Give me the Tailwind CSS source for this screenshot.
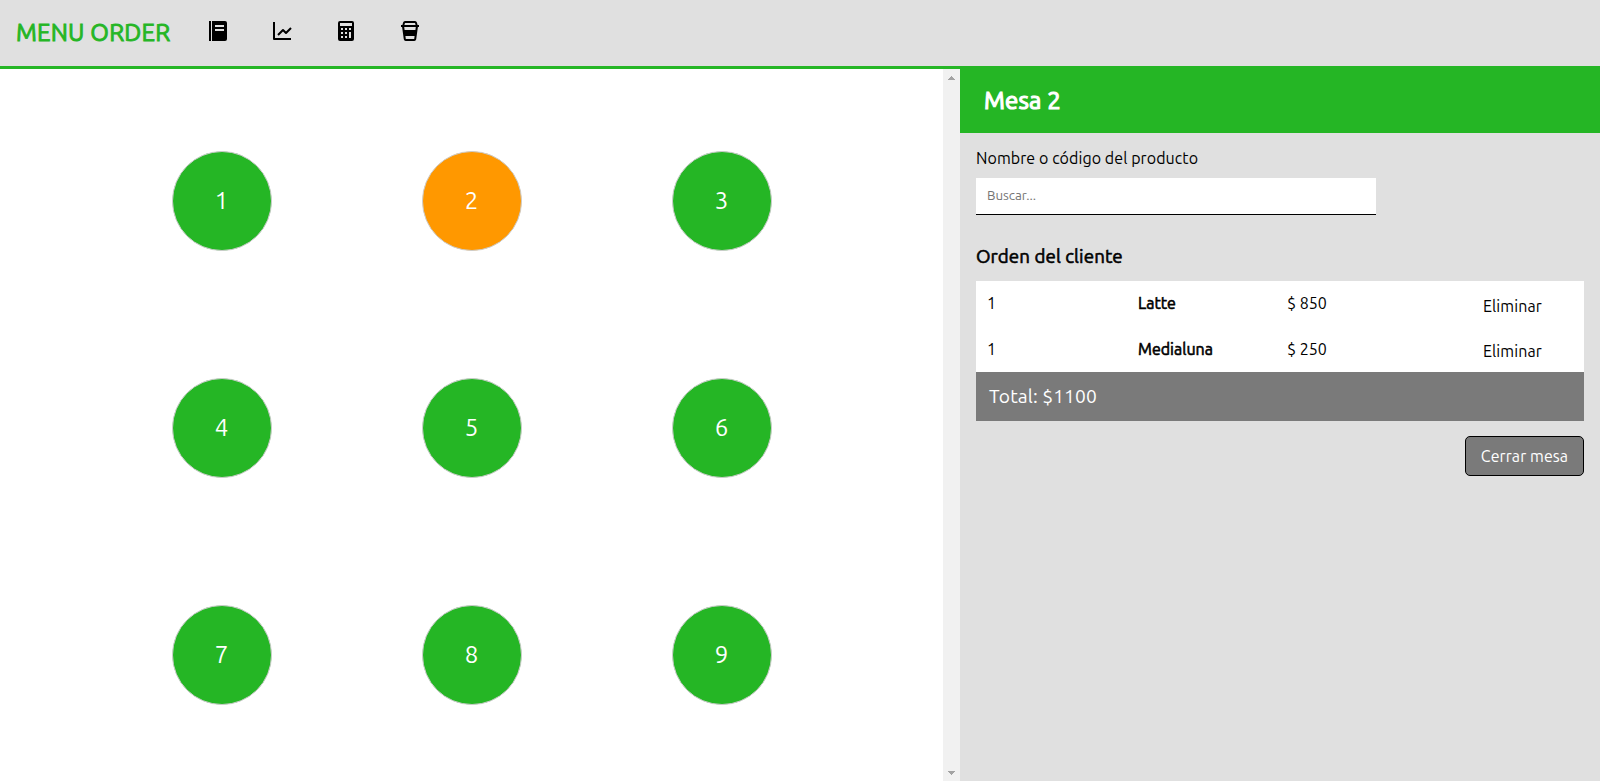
<!DOCTYPE html>
<html lang="es">
<head>
<meta charset="utf-8">
<title>Menu Order</title>
<script src="https://cdn.jsdelivr.net/npm/@tailwindcss/browser@4"></script>
</head>
<body class="flex h-[781px] flex-col overflow-hidden bg-white font-['Ubuntu','Noto_Sans',sans-serif] text-base text-black">
<header class="flex h-[66px] shrink-0 items-center bg-[#e0e0e0] pl-4">
  <h1 class="w-[190px] whitespace-nowrap text-2xl font-normal tracking-[0.2px] text-[#25b625] [-webkit-text-stroke:0.9px_#25b625]">MENU ORDER</h1>
  <nav class="mb-1 flex gap-10">
    <svg class="size-6" viewBox="0 0 24 24"><path d="M3 2h2v20H3zM19 2H6v20h13a2 2 0 0 0 2-2V4a2 2 0 0 0-2-2zm-1 10H9v-2h9zm0-4H9V6h9z"/></svg>
    <svg class="size-6" viewBox="0 0 24 24"><path d="M3 3v17a1 1 0 0 0 1 1h17v-2H5V3H3z"/><path d="M15.293 14.707a.999.999 0 0 0 1.414 0l5-5-1.414-1.414L16 12.586l-2.293-2.293a.999.999 0 0 0-1.414 0l-5 5 1.414 1.414L13 12.414l2.293 2.293z"/></svg>
    <svg class="size-6" viewBox="0 0 24 24"><path d="M18 2H6a2 2 0 0 0-2 2v16a2 2 0 0 0 2 2h12a2 2 0 0 0 2-2V4a2 2 0 0 0-2-2zM9 19H7v-2h2zm0-4H7v-2h2zm0-4H7V9h2zm4 8h-2v-2h2zm0-4h-2v-2h2zm0-4h-2V9h2zm4 8h-2v-6h2zm0-8h-2V9h2zm1-4H6V4h12z"/></svg>
    <svg class="size-6" viewBox="0 0 24 24"><path d="M21 6h-1.400L18.900 3.500A2 2 0 0 0 17 2H7a2 2 0 0 0-1.900 1.500L4.400 6H3v2h1.100l1.700 12.300A2 2 0 0 0 7.800 22h8.400a2 2 0 0 0 2-1.700L19.900 8H21zM7 4h10l.6 2H6.400zm9.200 16H7.800l-.4-3h9.200zM17.400 11H6.600l-.4-3h11.600z"/></svg>
  </nav>
</header>
<main class="flex min-h-0 flex-1">
  <section class="flex w-[960px] border-t-3 border-[#25b625]">
    <div class="flex w-[943px] justify-center pt-[18px] pl-px">
      <div class="grid h-[681px] w-[750px] grid-cols-3 grid-rows-3 place-items-center text-2xl text-white">
        <div class="flex size-[100px] items-center justify-center rounded-full border border-[#ccc] bg-[#25b625] pr-px">1</div>
        <div class="flex size-[100px] items-center justify-center rounded-full border border-[#ccc] bg-[#ff9800] pr-px">2</div>
        <div class="flex size-[100px] items-center justify-center rounded-full border border-[#ccc] bg-[#25b625] pr-px">3</div>
        <div class="flex size-[100px] items-center justify-center rounded-full border border-[#ccc] bg-[#25b625] pr-px">4</div>
        <div class="flex size-[100px] items-center justify-center rounded-full border border-[#ccc] bg-[#25b625] pr-px">5</div>
        <div class="flex size-[100px] items-center justify-center rounded-full border border-[#ccc] bg-[#25b625] pr-px">6</div>
        <div class="flex size-[100px] items-center justify-center rounded-full border border-[#ccc] bg-[#25b625] pr-px">7</div>
        <div class="flex size-[100px] items-center justify-center rounded-full border border-[#ccc] bg-[#25b625] pr-px">8</div>
        <div class="flex size-[100px] items-center justify-center rounded-full border border-[#ccc] bg-[#25b625] pr-px">9</div>
      </div>
    </div>
    <div class="flex w-[17px] flex-col items-center justify-between bg-[#f1f1f1] pt-[7px] pb-[6px]">
      <svg class="h-1 w-[7px]" viewBox="0 0 7 4" fill="#a3a3a3" shape-rendering="crispEdges"><path d="M3 0h1v1h1v1h1v1h1v1H0V3h1V2h1V1h1z"/></svg>
      <svg class="h-1 w-[7px]" viewBox="0 0 7 4" fill="#a3a3a3" shape-rendering="crispEdges"><path d="M0 0h7v1H6v1H5v1H4v1H3V3H2V2H1V1H0z"/></svg>
    </div>
  </section>
  <aside class="flex w-[640px] flex-col bg-[#e0e0e0]">
    <h2 class="flex h-[67px] items-center bg-[#25b625] pt-0.5 pl-6 text-2xl font-normal tracking-[0.2px] text-white [-webkit-text-stroke:1.2px_white]">Mesa 2</h2>
    <div class="flex flex-col px-4 pt-[13px]">
      <label for="q" class="h-8 whitespace-nowrap tracking-[0.07px]">Nombre o código del producto</label>
      <input id="q" class="h-[37px] w-[400px] border-b border-black bg-white px-[11px] pb-0.5 text-[13.333px] placeholder:text-[#757575]" placeholder="Buscar...">
      <h3 class="mt-[30px] h-9 text-[18.720px] leading-6 font-normal tracking-[0.1px] [-webkit-text-stroke:0.6px_black]">Orden del cliente</h3>
      <div class="grid h-[91px] grid-cols-[150px_150px_150px_1fr] grid-rows-[46px_45px] bg-white pl-[11px]">
        <span class="pt-[10px]">1</span><span class="pt-[10px] pl-px [-webkit-text-stroke:0.6px_black]">Latte</span><span class="pt-[10px]">$ 850</span><span class="pt-[13px] pl-1 text-center tracking-[0.1px]">Eliminar</span>
        <span class="pt-[10px]">1</span><span class="pt-[10px] pl-px [-webkit-text-stroke:0.6px_black]">Medialuna</span><span class="pt-[10px]">$ 250</span><span class="pt-[12px] pl-1 text-center tracking-[0.1px]">Eliminar</span>
      </div>
      <div class="flex h-[49px] items-center bg-[#7a7a7a] pl-[13px] text-[19.200px] tracking-[0.1px] text-white">Total: $1100</div>
      <button class="mt-[15px] h-10 w-[119px] self-end rounded-[5px] border border-black bg-[#7a7a7a] tracking-[0.08px] text-white">Cerrar mesa</button>
    </div>
  </aside>
</main>
</body>
</html>
